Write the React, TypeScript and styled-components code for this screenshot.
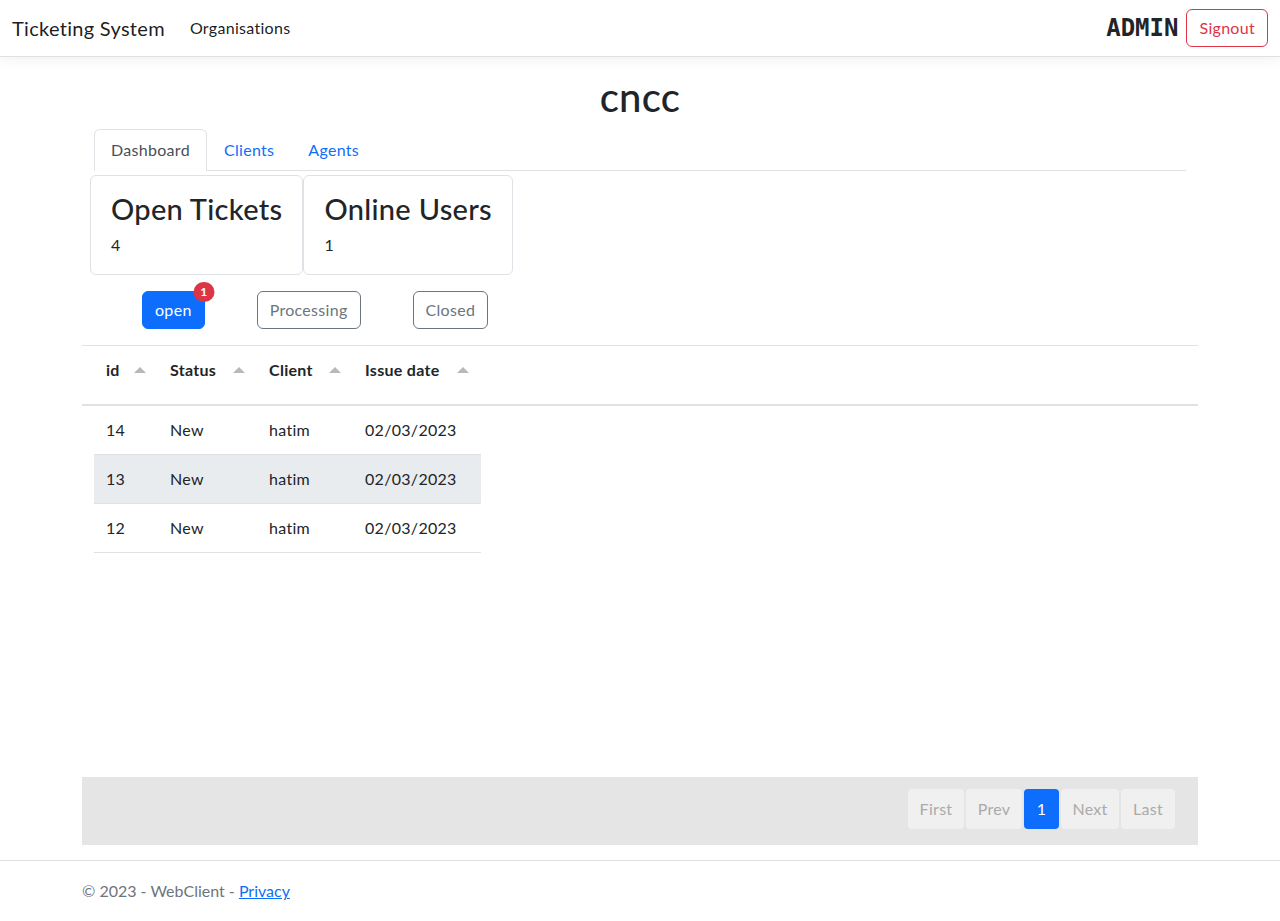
import React from "react";
import styled, { createGlobalStyle } from "styled-components";

const Global = createGlobalStyle`
  * { box-sizing: border-box; }
  html, body { margin: 0; padding: 0; }
  body {
    font-family: Lato, "Noto Sans", sans-serif;
    font-size: 16px;
    line-height: 1.5;
    letter-spacing: 0.3px;
    color: #212529;
    background: #fff;
  }
`;

const Page = styled.div`
  min-height: 921px;
  display: flex;
  flex-direction: column;
`;

const Navbar = styled.nav`
  height: 57px;
  display: flex;
  align-items: center;
  justify-content: space-between;
  padding: 0 12px;
  border-bottom: 1px solid #dee2e6;
  box-shadow: 0 4px 12px rgba(0, 0, 0, 0.05);
`;

const NavLeft = styled.div`
  display: flex;
  align-items: center;
  gap: 25px;
`;

const Brand = styled.a`
  font-size: 20px;
  color: rgba(0, 0, 0, 0.9);
  text-decoration: none;
`;

const NavLink = styled.a`
  font-size: 16px;
  color: rgba(0, 0, 0, 0.9);
  text-decoration: none;
`;

const NavRight = styled.div`
  display: flex;
  align-items: center;
  gap: 8px;
`;

const AdminLabel = styled.span`
  font-family: "DejaVu Sans Mono", "Liberation Mono", monospace;
  font-weight: 700;
  font-size: 24px;
  letter-spacing: 0;
  color: #212529;
`;

const Btn = styled.button<{ $variant: "primary" | "secondary" | "danger" }>`
  position: relative;
  font-family: inherit;
  font-size: 16px;
  letter-spacing: 0.3px;
  line-height: 24px;
  padding: 6px 12px;
  border-radius: 6px;
  cursor: pointer;
  border: 1px solid
    ${(p) => (p.$variant === "primary" ? "#0d6efd" : p.$variant === "danger" ? "#dc3545" : "#6c757d")};
  background: ${(p) => (p.$variant === "primary" ? "#0d6efd" : "transparent")};
  color: ${(p) => (p.$variant === "primary" ? "#fff" : p.$variant === "danger" ? "#dc3545" : "#6c757d")};
`;

const Main = styled.main`
  flex: 1;
  width: 1140px;
  margin: 16px auto 0;
  padding: 0 12px 15px;
  display: flex;
  flex-direction: column;
`;

const Title = styled.h1`
  margin: 0 0 8px;
  font-size: 40px;
  font-weight: 500;
  line-height: 1.2;
  text-align: center;
`;

const Tabs = styled.div`
  display: flex;
  margin: 0 12px;
  border-bottom: 1px solid #dee2e6;
`;

const Tab = styled.a<{ $active?: boolean }>`
  padding: 8px 16px;
  margin-bottom: -1px;
  border: 1px solid transparent;
  border-color: ${(p) => (p.$active ? "#dee2e6 #dee2e6 #fff" : "transparent")};
  border-top-left-radius: 6px;
  border-top-right-radius: 6px;
  background: ${(p) => (p.$active ? "#fff" : "transparent")};
  color: ${(p) => (p.$active ? "#495057" : "#0d6efd")};
  text-decoration: none;
`;

const CardRow = styled.div`
  display: flex;
  margin: 4px 8px 0;
`;

const Card = styled.div`
  border: 1px solid #dee2e6;
  border-radius: 6px;
  padding: 16px 20px 17px;
`;

const CardTitle = styled.h3`
  margin: 0;
  font-size: 29px;
  font-weight: 500;
  line-height: 1.2;
`;

const CardValue = styled.p`
  margin: 6px 0 0;
`;

const FilterRow = styled.div`
  display: flex;
  gap: 52px;
  padding-left: 60px;
  margin: 16px 0;
`;

const Badge = styled.span`
  position: absolute;
  top: 0;
  left: 100%;
  transform: translate(-50%, -50%);
  min-width: 21px;
  height: 20px;
  padding: 0 6px;
  border-radius: 10px;
  background: #dc3545;
  color: #fff;
  font-size: 12px;
  font-weight: 700;
  letter-spacing: 0;
  line-height: 20px;
  text-align: center;
`;

const TableArea = styled.div`
  height: 432px;
`;

const HeadRow = styled.div`
  display: flex;
  height: 61px;
  padding: 12px 0 0 12px;
  border-top: 1px solid #dee2e6;
  border-bottom: 2px solid #dee2e6;
`;

const HeadCell = styled.div<{ $w: number }>`
  width: ${(p) => p.$w}px;
  padding: 0 12px;
  display: flex;
  align-items: center;
  justify-content: space-between;
  font-weight: 700;
  height: 24px;
`;

const Caret = styled.span`
  width: 0;
  height: 0;
  border-left: 6px solid transparent;
  border-right: 6px solid transparent;
  border-bottom: 6px solid #b8b8b8;
`;

const Body = styled.div`
  margin-left: 12px;
  width: 387px;
`;

const Row = styled.div<{ $shade?: boolean }>`
  display: flex;
  height: 49px;
  align-items: center;
  border-bottom: 1px solid #dee2e6;
  background: ${(p) => (p.$shade ? "#e9ecef" : "transparent")};
`;

const Cell = styled.div<{ $w: number }>`
  width: ${(p) => p.$w}px;
  padding: 0 12px;
`;

const PagerBar = styled.div`
  height: 68px;
  background: #e5e5e5;
  display: flex;
  justify-content: flex-end;
  align-items: flex-start;
  padding: 12px 23px 0 0;
  gap: 2px;
`;

const PageBtn = styled.span<{ $active?: boolean; $w: number }>`
  width: ${(p) => p.$w}px;
  height: 40px;
  display: flex;
  align-items: center;
  justify-content: center;
  border-radius: 4px;
  background: ${(p) => (p.$active ? "#0d6efd" : "#f0f0f0")};
  color: ${(p) => (p.$active ? "#fff" : "#aaa")};
`;

const Footer = styled.footer`
  border-top: 1px solid #dee2e6;
  line-height: 60px;
  letter-spacing: 0;
  color: #6c757d;
`;

const FooterInner = styled.div`
  width: 1140px;
  margin: 0 auto;
  padding: 0 12px;
`;

const FooterLink = styled.a`
  color: #0d6efd;
  text-decoration: underline;
`;

const cols = [64, 99, 96, 128];
const headers = ["id", "Status", "Client", "Issue date"];
const rows = [
  ["14", "New", "hatim", "02/03/2023"],
  ["13", "New", "hatim", "02/03/2023"],
  ["12", "New", "hatim", "02/03/2023"],
];

export default function App() {
  return (
    <Page>
      <Global />
      <Navbar>
        <NavLeft>
          <Brand href="#">Ticketing System</Brand>
          <NavLink href="#">Organisations</NavLink>
        </NavLeft>
        <NavRight>
          <AdminLabel>ADMIN</AdminLabel>
          <Btn $variant="danger">Signout</Btn>
        </NavRight>
      </Navbar>
      <Main>
        <Title>cncc</Title>
        <Tabs>
          <Tab $active href="#">Dashboard</Tab>
          <Tab href="#">Clients</Tab>
          <Tab href="#">Agents</Tab>
        </Tabs>
        <CardRow>
          <Card>
            <CardTitle>Open Tickets</CardTitle>
            <CardValue>4</CardValue>
          </Card>
          <Card>
            <CardTitle>Online Users</CardTitle>
            <CardValue>1</CardValue>
          </Card>
        </CardRow>
        <FilterRow>
          <Btn $variant="primary">
            open
            <Badge>1</Badge>
          </Btn>
          <Btn $variant="secondary">Processing</Btn>
          <Btn $variant="secondary">Closed</Btn>
        </FilterRow>
        <TableArea>
          <HeadRow>
            {headers.map((h, i) => (
              <HeadCell key={h} $w={cols[i]}>
                {h}
                <Caret />
              </HeadCell>
            ))}
          </HeadRow>
          <Body>
            {rows.map((r, ri) => (
              <Row key={r[0]} $shade={ri === 1}>
                {r.map((c, ci) => (
                  <Cell key={ci} $w={cols[ci]}>
                    {c}
                  </Cell>
                ))}
              </Row>
            ))}
          </Body>
        </TableArea>
        <PagerBar>
          <PageBtn $w={56}>First</PageBtn>
          <PageBtn $w={56}>Prev</PageBtn>
          <PageBtn $w={35} $active>1</PageBtn>
          <PageBtn $w={58}>Next</PageBtn>
          <PageBtn $w={54}>Last</PageBtn>
        </PagerBar>
      </Main>
      <Footer>
        <FooterInner>
          © 2023 - WebClient - <FooterLink href="#">Privacy</FooterLink>
        </FooterInner>
      </Footer>
    </Page>
  );
}
